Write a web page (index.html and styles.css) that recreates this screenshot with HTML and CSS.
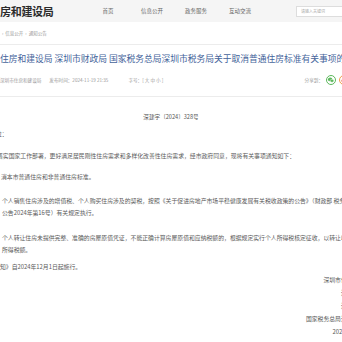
FILE: index.html
```html
<!DOCTYPE html>
<html lang="zh-CN">
<head>
<meta charset="utf-8">
<title>通知公告</title>
<link rel="stylesheet" href="styles.css">
</head>
<body>
<header class="top">
  <div class="logo">房和建设局</div>
  <nav class="nav">
    <a class="nav-item">首页</a>
    <a class="nav-item">信息公开</a>
    <a class="nav-item">政务服务</a>
    <a class="nav-item">互动交流</a>
  </nav>
  <div class="search">请输入关键词</div>
</header>
<div class="crumb"><span class="sep">›</span>信息公开<span class="sep">›</span>通知公告</div>
<main class="article">
  <h1 class="title">住房和建设局 深圳市财政局 国家税务总局深圳市税务局关于取消普通住房标准有关事项的通知</h1>
  <div class="meta">
    <span class="m-src">深圳市住房和建设局</span>
    <span class="m-time">发布时间：2024-11-19 21:35</span>
    <span class="m-size">字号：[ 大 中 小 ]</span>
    <span class="share">分享到：
      <span class="ico ico-wx"><svg viewBox="0 0 10 10" width="8" height="8"><ellipse cx="4" cy="4.3" rx="2.8" ry="2.3" fill="#5cb85c"/><ellipse cx="6.3" cy="6" rx="2.3" ry="1.9" fill="#5cb85c" stroke="#fff" stroke-width="0.6"/></svg></span>
      <span class="ico ico-wb"><svg viewBox="0 0 10 10" width="8" height="8"><ellipse cx="5" cy="6" rx="3.2" ry="2.3" fill="#e8623a"/><circle cx="4.6" cy="6.2" r="1" fill="#fff"/></svg></span>
    </span>
  </div>
  <div class="docno">深建字〔2024〕328号</div>
  <div class="body">
    <p class="line p0">位：</p>
    <p class="line p1">落实国家工作部署，更好满足居民刚性住房需求和多样化改善性住房需求，经市政府同意，现将有关事项通知如下：</p>
    <p class="line p2">消本市普通住房和非普通住房标准。</p>
    <p class="line p3">个人销售住房涉及的增值税、个人购买住房涉及的契税，按照《关于促进房地产市场平稳健康发展有关税收政策的公告》（财政部 税务总局<br>公告2024年第16号）有关规定执行。</p>
    <p class="line p4">个人转让住房未提供完整、准确的房屋原值凭证，不能正确计算房屋原值和应纳税额的，根据规定实行个人所得税核定征收，以转让收入<br>所得税额。</p>
    <p class="line p5">知》自2024年12月1日起施行。</p>
  </div>
  <div class="sign">
    <p class="s1">深圳市住房和建设局</p>
    <p class="s2">深圳市财政局</p>
    <p class="s3">深圳市财政局</p>
    <p class="s4">国家税务总局深圳市税务局</p>
    <p class="s5">2024年11月19日</p>
  </div>
</main>
</body>
</html>
```
FILE: styles.css
```css
html, body {
  margin: 0;
  padding: 0;
  background: #fff;
}
body {
  width: 342px;
  height: 342px;
  overflow: hidden;
  font-family: "Noto Sans CJK SC", "Noto Sans", sans-serif;
  color: #555;
}
.top {
  display: flex;
  align-items: center;
  height: 22px;
  background: #f5f5f5;
}
.logo {
  width: 86px;
  flex: none;
  font-size: 11px;
  font-weight: 700;
  color: #2b2b2b;
  line-height: 22px;
  letter-spacing: -0.3px;
}
.nav {
  display: flex;
  flex: none;
}
.nav-item {
  width: 44px;
  text-align: center;
  font-size: 5.5px;
  color: #666;
}
.search {
  flex: none;
  margin-left: 34px;
  width: 50px;
  height: 11px;
  box-sizing: border-box;
  border: 1px solid #ddd;
  background: #fff;
  font-size: 4px;
  line-height: 9px;
  padding-left: 4px;
  color: #aaa;
}
.crumb {
  height: 22px;
  line-height: 22px;
  font-size: 4.5px;
  color: #999;
  padding-left: 2px;
}
.crumb .sep {
  margin-right: 2px;
  margin-left: 2px;
}
.crumb .sep:first-child {
  margin-left: 0;
}
.article {
  border-top: 1px solid #ececec;
  width: 376px;
}
.title {
  margin: 7px 0 0;
  font-size: 8.75px;
  font-weight: 400;
  line-height: 14px;
  color: #44639a;
  white-space: nowrap;
}
.meta {
  display: flex;
  align-items: center;
  height: 12px;
  margin-top: 8px;
  font-size: 4.6px;
  color: #999;
  white-space: nowrap;
  width: 342px;
  border-bottom: 1px solid #ececec;
  padding-bottom: 10px;
}
.m-time {
  margin-left: 8px;
}
.m-size {
  margin-left: 20px;
}
.share {
  margin-left: auto;
  display: flex;
  align-items: center;
  margin-right: -7px;
}
.ico {
  display: inline-flex;
  align-items: center;
  justify-content: center;
  width: 10px;
  height: 10px;
  box-sizing: border-box;
  border-radius: 50%;
  background: #fff;
  margin-left: 3px;
}
.ico-wx {
  border: 1px solid #5cb85c;
}
.ico-wb {
  border: 1px solid #f0a04b;
}
.docno {
  width: 342px;
  text-align: center;
  font-size: 5.6px;
  line-height: 12px;
  margin-top: 14px;
  color: #555;
}
.body {
  font-size: 5.85px;
  line-height: 12px;
  color: #5a5a5a;
}
.line {
  margin: 0;
  white-space: nowrap;
}
.p0 {
  margin-top: 5px;
  text-indent: -4px;
}
.p1 {
  margin-top: 10px;
  text-indent: -3px;
}
.p2 {
  margin-top: 9px;
  padding-left: 1px;
}
.p3 {
  margin-top: 12px;
  padding-left: 2px;
}
.p4 {
  margin-top: 13px;
  padding-left: 2px;
}
.p5 {
  margin-top: 5px;
}
.sign {
  text-align: right;
  font-size: 5.85px;
  line-height: 13px;
  color: #555;
}
.sign p {
  margin: 0;
  white-space: nowrap;
}
.s1 {
  margin-top: -2px;
}
.s3 {
  margin-right: 3px;
}
.s5 {
  margin-top: 5px;
}
```
